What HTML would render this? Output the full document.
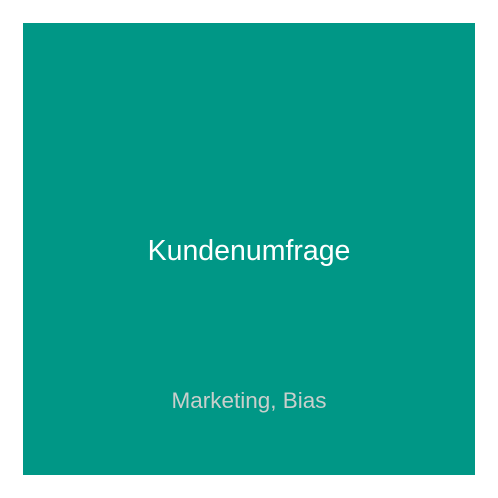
<!DOCTYPE html>
<html><head><style>
body{margin:0;width:498px;height:498px;background:#fff;font-family:"Liberation Sans",sans-serif;}
.box{position:absolute;left:23px;top:23px;width:452px;height:452px;background:#009786;}
.t{position:absolute;left:0;width:452px;text-align:center;top:211px;font-size:28.5px;line-height:34px;color:#fff;}
.s{position:absolute;left:0;width:452px;text-align:center;top:364px;font-size:22.5px;line-height:28px;color:#c9cfcc;}
</style></head><body>
<div class="box"><div class="t">Kundenumfrage</div><div class="s">Marketing, Bias</div></div>
</body></html>
